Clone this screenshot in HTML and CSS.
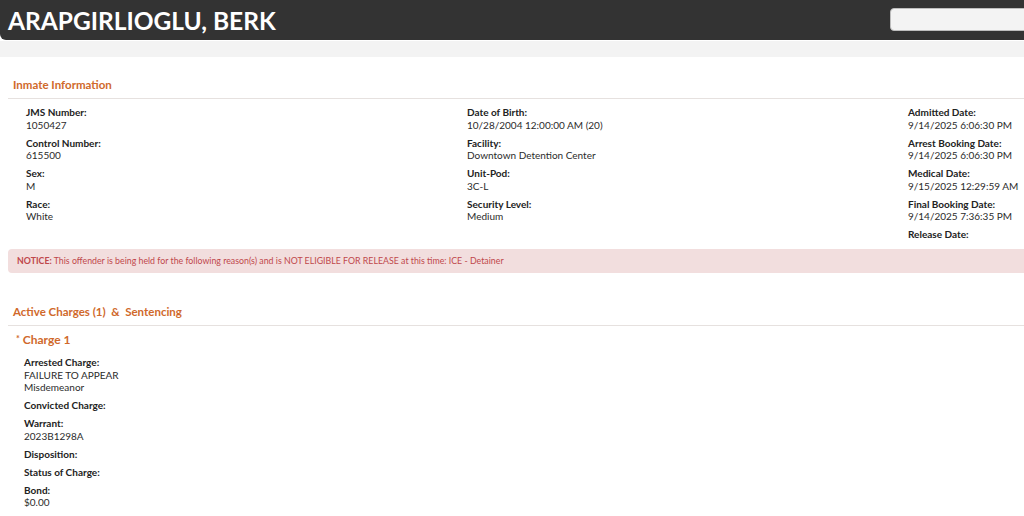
FILE: index.html
```html
<!DOCTYPE html>
<html>
<head>
<meta charset="utf-8">
<title>ARAPGIRLIOGLU, BERK</title>
<link rel="stylesheet" href="styles.css">
</head>
<body>
<div class="page">
  <header class="topbar">
    <h1 class="name">ARAPGIRLIOGLU, BERK</h1>
    <input class="search" type="text" aria-label="Search">
  </header>
  <div class="band"></div>
  <main class="content">
    <section class="section">
      <h2 class="section-title">Inmate Information</h2>
      <div class="info-grid">
        <div class="col">
          <div class="field"><div class="label">JMS Number:</div><div class="value">1050427</div></div>
          <div class="field"><div class="label">Control Number:</div><div class="value">615500</div></div>
          <div class="field"><div class="label">Sex:</div><div class="value">M</div></div>
          <div class="field"><div class="label">Race:</div><div class="value">White</div></div>
        </div>
        <div class="col">
          <div class="field"><div class="label">Date of Birth:</div><div class="value">10/28/2004 12:00:00 AM (20)</div></div>
          <div class="field"><div class="label">Facility:</div><div class="value">Downtown Detention Center</div></div>
          <div class="field"><div class="label">Unit-Pod:</div><div class="value">3C-L</div></div>
          <div class="field"><div class="label">Security Level:</div><div class="value">Medium</div></div>
        </div>
        <div class="col">
          <div class="field"><div class="label">Admitted Date:</div><div class="value">9/14/2025 6:06:30 PM</div></div>
          <div class="field"><div class="label">Arrest Booking Date:</div><div class="value">9/14/2025 6:06:30 PM</div></div>
          <div class="field"><div class="label">Medical Date:</div><div class="value">9/15/2025 12:29:59 AM</div></div>
          <div class="field"><div class="label">Final Booking Date:</div><div class="value">9/14/2025 7:36:35 PM</div></div>
          <div class="field"><div class="label">Release Date:</div></div>
        </div>
      </div>
      <div class="notice"><strong>NOTICE:</strong> This offender is being held for the following reason(s) and is NOT ELIGIBLE FOR RELEASE at this time: ICE - Detainer</div>
    </section>
    <section class="section charges">
      <h2 class="section-title">Active Charges (1) &nbsp;&amp;&nbsp; Sentencing</h2>
      <h3 class="charge-title"><span class="star">*</span> Charge 1</h3>
      <div class="charge-fields">
        <div class="field"><div class="label">Arrested Charge:</div><div class="value">FAILURE TO APPEAR</div><div class="value">Misdemeanor</div></div>
        <div class="field"><div class="label">Convicted Charge:</div></div>
        <div class="field"><div class="label">Warrant:</div><div class="value">2023B1298A</div></div>
        <div class="field"><div class="label">Disposition:</div></div>
        <div class="field"><div class="label">Status of Charge:</div></div>
        <div class="field"><div class="label">Bond:</div><div class="value">$0.00</div></div>
      </div>
    </section>
  </main>
</div>
</body>
</html>
```
FILE: styles.css
```css
html, body {
  margin: 0;
  padding: 0;
  background: #ffffff;
  overflow: hidden;
}
body {
  font-family: Lato, "Liberation Sans", Arial, sans-serif;
  color: #222222;
}
.page {
  width: 1110px;
}
.topbar {
  display: flex;
  align-items: center;
  justify-content: space-between;
  height: 40px;
  background: #333333;
  border-bottom-left-radius: 6px;
  padding: 0 16px 0 8px;
}
.name {
  margin: 0;
  color: #ffffff;
  font-size: 24.5px;
  font-weight: 700;
  line-height: 40px;
  padding-top: 1px;
}
.search {
  width: 204px;
  height: 23px;
  box-sizing: border-box;
  margin-top: -2px;
  border: 1px solid #bdbdbd;
  border-radius: 4px;
  background: #f3f3f3;
  outline: none;
}
.band {
  height: 16px;
  background: #f3f3f3;
  margin-top: 1px;
}
.content {
  padding: 20px 0 0 8px;
}
.section-title {
  margin: 0;
  padding: 0 0 5px 5px;
  font-size: 11.5px;
  line-height: 16px;
  font-weight: 700;
  color: #d0692b;
  border-bottom: 1px solid #e6e1df;
}
.info-grid {
  display: grid;
  grid-template-columns: 441px 441px 441px;
  padding: 7px 0 0 18px;
}
.field {
  margin-bottom: 5.5px;
  font-size: 10px;
  line-height: 12.5px;
}
.label {
  font-weight: 700;
  color: #222222;
}
.value {
  color: #2b2b2b;
}
.notice {
  margin-top: 3px;
  background: #f2dede;
  color: #c0474b;
  font-size: 8.8px;
  line-height: 24px;
  padding: 0 9px;
  border-radius: 4px 0 0 4px;
}
.notice strong {
  font-weight: 700;
}
.charges {
  margin-top: 31px;
}
.charge-title {
  margin: 5px 0 0 0;
  padding-left: 8px;
  font-size: 12px;
  line-height: 16px;
  font-weight: 700;
  color: #d0692b;
}
.star {
  font-size: 9px;
  vertical-align: 2px;
}
.charge-fields {
  padding: 8px 0 0 16px;
}
.charge-fields .field {
  margin-bottom: 5.6px;
}
```
